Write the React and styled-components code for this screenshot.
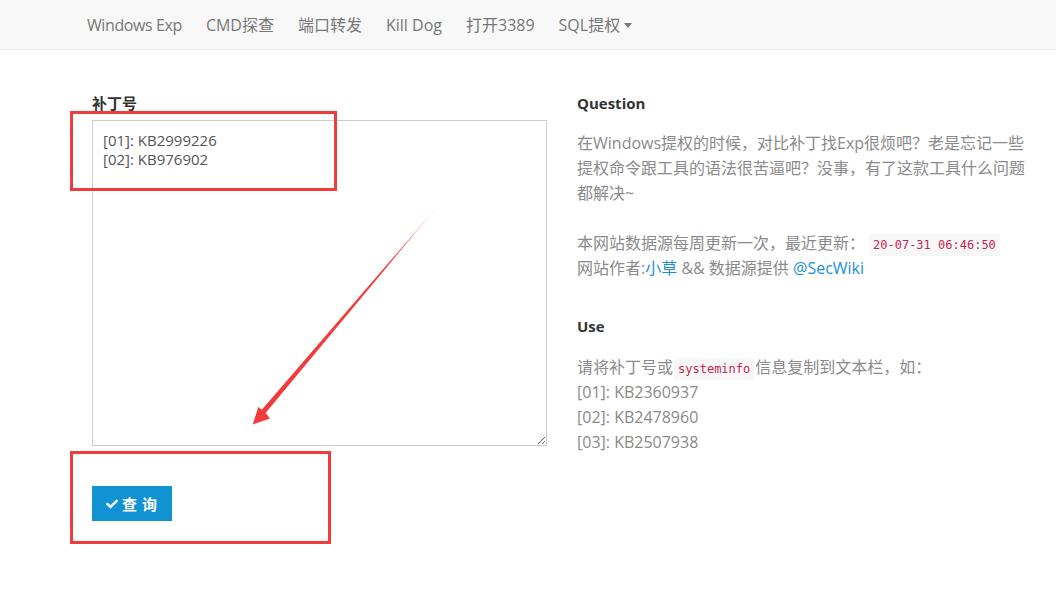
import styled, {createGlobalStyle} from "styled-components";
import {FaCheck} from "react-icons/fa";

const GlobalStyle = createGlobalStyle`
    body {
        margin: 0;
        background: #fff;
        font-family: "Open Sans", "Noto Sans CJK SC", sans-serif;
        color: #333;
    }
`;

const Page = styled.div`
    position: relative;
    width: 1056px;
    min-height: 605px;
`;

const Navbar = styled.nav`
    height: 49px;
    background: #f8f8f8;
    border-bottom: 1px solid #e7e7e7;
    display: flex;
    align-items: center;
    padding-left: 75px;
`;

const NavItem = styled.a`
    font-size: 16px;
    line-height: 20px;
    color: #777;
    padding: 0 12px;
    text-decoration: none;
    display: flex;
    align-items: center;
    gap: 4px;
    letter-spacing: ${({$tight}) => ($tight ? "-0.4px" : "0")};
`;

const Caret = styled.span`
    width: 0;
    height: 0;
    border-left: 4px solid transparent;
    border-right: 4px solid transparent;
    border-top: 5px solid #777;
    margin-top: 1px;
`;

const Main = styled.main`
    display: grid;
    grid-template-columns: 455px 455px;
    column-gap: 30px;
    padding: 43px 0 0 92px;
`;

const Column = styled.div`
    display: flex;
    flex-direction: column;
`;

const Label = styled.label`
    font-size: 15px;
    line-height: 20px;
    font-weight: 700;
    color: #333;
    margin-bottom: 7px;
`;

const TextArea = styled.textarea`
    box-sizing: border-box;
    width: 455px;
    height: 326px;
    border: 1px solid #ccc;
    padding: 10px;
    font-family: "Open Sans", "Noto Sans CJK SC", sans-serif;
    font-size: 15px;
    line-height: 19px;
    color: #555;
    outline: none;
    margin: 0;
`;

const SubmitButton = styled.button`
    margin-top: 40px;
    align-self: flex-start;
    width: 80px;
    height: 35px;
    padding: 0 0 0 4px;
    background: #1192d3;
    border: none;
    color: #fff;
    font-family: "Open Sans", "Noto Sans CJK SC", sans-serif;
    font-size: 15px;
    font-weight: 700;
    display: flex;
    align-items: center;
    justify-content: center;
    gap: 4px;
    letter-spacing: 5px;
    cursor: pointer;

    svg {
        font-size: 12px;
    }
`;

const Heading = styled.h4`
    margin: 0;
    font-size: 15px;
    line-height: 20px;
    font-weight: 700;
    color: #333;
`;

const Text = styled.p`
    margin: ${({$last}) => ($last ? "19px 0 0" : "18px 0 35px")};
    font-size: 16px;
    line-height: 25px;
    color: #8a8a8a;
`;

const Code = styled.code`
    font-family: "DejaVu Sans Mono", monospace;
    font-size: 12px;
    line-height: 1;
    color: #c7254e;
    background: #f7f7f7;
    padding: 4px 4px;
    border-radius: 3px;
    margin: 0 ${({$gap}) => $gap || "4px"};
`;

const Link = styled.a`
    color: #1a8fd8;
    text-decoration: none;
`;

const RedBox = styled.div`
    position: absolute;
    left: ${({$x}) => $x}px;
    top: ${({$y}) => $y}px;
    width: ${({$w}) => $w}px;
    height: ${({$h}) => $h}px;
    box-sizing: border-box;
    border: 3px solid #f23b3b;
    pointer-events: none;
`;

const ArrowLayer = styled.svg`
    position: absolute;
    left: 0;
    top: 0;
    pointer-events: none;
`;

const navLinks = ["CMD探查", "端口转发", "Kill Dog", "打开3389"];

export default function App() {
    return (
        <Page>
            <GlobalStyle/>
            <Navbar>
                <NavItem href="#" $tight>Windows Exp</NavItem>
                {navLinks.map((l) => (
                    <NavItem key={l} href="#">{l}</NavItem>
                ))}
                <NavItem href="#">SQL提权<Caret/></NavItem>
            </Navbar>

            <Main>
                <Column>
                    <Label>补丁号</Label>
                    <TextArea defaultValue={"[01]: KB2999226\n[02]: KB976902"}/>
                    <SubmitButton><FaCheck/>查询</SubmitButton>
                </Column>
                <Column>
                    <Heading>Question</Heading>
                    <Text>
                        在Windows提权的时候，对比补丁找Exp很烦吧？老是忘记一些提权命令跟工具的语法很苦逼吧？没事，有了这款工具什么问题都解决~
                        <br/><br/>
                        本网站数据源每周更新一次，最近更新：<Code>20-07-31 06:46:50</Code>
                        <br/>
                        网站作者:<Link href="#">小草</Link> &amp;&amp; 数据源提供 <Link href="#">@SecWiki</Link>
                    </Text>
                    <Heading>Use</Heading>
                    <Text $last>
                        请将补丁号或<Code $gap="1px">systeminfo</Code>信息复制到文本栏，如：
                        <br/>[01]: KB2360937
                        <br/>[02]: KB2478960
                        <br/>[03]: KB2507938
                    </Text>
                </Column>
            </Main>

            <RedBox $x={70} $y={111} $w={267} $h={80}/>
            <RedBox $x={70} $y={451} $w={261} $h={93}/>
            <ArrowLayer width="1056" height="605">
                <defs>
                    <linearGradient id="fade" x1="441" y1="202" x2="300" y2="370" gradientUnits="userSpaceOnUse">
                        <stop offset="0" stopColor="#f23b3b" stopOpacity="0.1"/>
                        <stop offset="0.4" stopColor="#f23b3b" stopOpacity="1"/>
                    </linearGradient>
                </defs>
                <polygon
                    points="441,202 265.6,412.9 270,418.5 252.7,424.5 258.3,407 261.8,409.7"
                    fill="url(#fade)"
                />
            </ArrowLayer>
        </Page>
    );
}
